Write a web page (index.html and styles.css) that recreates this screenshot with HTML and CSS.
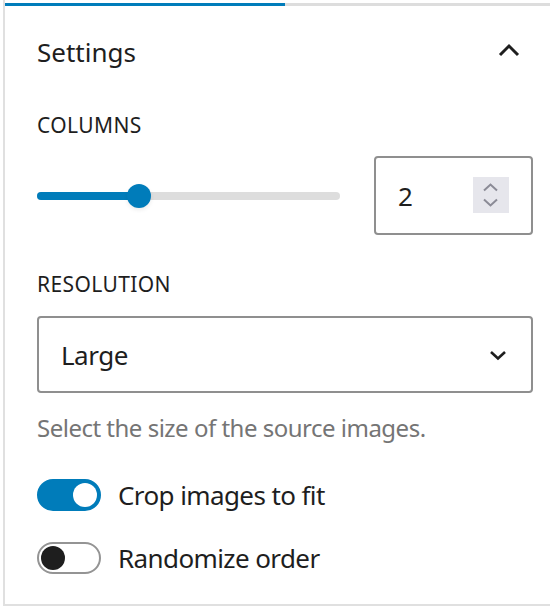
FILE: index.html
```html
<!DOCTYPE html>
<html>
<head>
<meta charset="utf-8">
<link rel="stylesheet" href="styles.css">
</head>
<body>
<div class="panel">
  <div class="tabline"><div class="tab-active"></div></div>
  <div class="header">
    <h2 class="title">Settings</h2>
    <svg class="chev-up" width="22" height="14" viewBox="0 0 22 14"><polyline points="2,12 11,3 20,12" fill="none" stroke="#1e1e1e" stroke-width="3"/></svg>
  </div>
  <div class="body">
    <div class="label">COLUMNS</div>
    <div class="range-row">
      <div class="slider">
        <div class="track"><div class="fill"></div></div>
        <div class="thumb"></div>
      </div>
      <div class="number">
        <span class="num-val">2</span>
        <div class="spin">
          <svg width="36" height="36" viewBox="0 0 36 36"><polyline points="11,13.5 17.5,7.5 24,13.5" fill="none" stroke="#8b8b96" stroke-width="2"/><polyline points="11,22.5 17.5,28.5 24,22.5" fill="none" stroke="#8b8b96" stroke-width="2"/></svg>
        </div>
      </div>
    </div>
    <div class="label label-res">RESOLUTION</div>
    <div class="select">
      <span class="sel-val">Large</span>
      <svg class="chev-down" width="18" height="12" viewBox="0 0 18 12"><polyline points="2,3 9,9.5 16,3" fill="none" stroke="#1e1e1e" stroke-width="2.6"/></svg>
    </div>
    <p class="help">Select the size of the source images.</p>
    <div class="toggle-row first">
      <span class="toggle on"><span class="knob"></span></span>
      <span class="toggle-label">Crop images to fit</span>
    </div>
    <div class="toggle-row">
      <span class="toggle off"><span class="knob"></span></span>
      <span class="toggle-label">Randomize order</span>
    </div>
  </div>
</div>
</body>
</html>
```
FILE: styles.css
```css
* { box-sizing: border-box; }
html, body { margin: 0; padding: 0; background: #fff; }
body {
  font-family: "Noto Sans", "Open Sans", sans-serif;
  color: #1e1e1e;
  width: 550px;
  height: 608px;
  overflow: hidden;
}
.panel {
  margin-left: 3px;
  height: 606px;
  border-left: 2px solid #e0e0e0;
  border-bottom: 2px solid #e0e0e0;
  display: flex;
  flex-direction: column;
}
.tabline {
  margin-top: 3px;
  height: 3px;
  background: #dddddd;
  display: flex;
}
.tab-active {
  width: 280px;
  background: #007cba;
}
.header {
  height: 92px;
  display: flex;
  align-items: center;
  justify-content: space-between;
  padding: 0 30px 0 32px;
}
.title {
  margin: 0;
  font-size: 26px;
  font-weight: 400;
  line-height: 36px;
}
.chev-up { display: block; margin-bottom: 4px; }
.body {
  padding: 0 17px 0 32px;
}
.label {
  margin-top: 13px;
  font-size: 21px;
  line-height: 28px;
  font-weight: 400;
  letter-spacing: 0.4px;
}
.range-row {
  margin-top: 17px;
  height: 79px;
  display: flex;
  align-items: center;
}
.slider {
  position: relative;
  flex: 1;
  height: 24px;
  margin-right: 34px;
  display: flex;
  align-items: center;
}
.track {
  width: 100%;
  height: 8px;
  border-radius: 4px;
  background: #dddddd;
  overflow: hidden;
}
.fill {
  width: 102px;
  height: 100%;
  background: #007cba;
}
.thumb {
  position: absolute;
  left: 90px;
  top: 0;
  width: 24px;
  height: 24px;
  border-radius: 50%;
  background: #007cba;
  box-shadow: 0 2px 4px rgba(0,0,0,0.08);
}
.number {
  width: 159px;
  height: 79px;
  border: 2px solid #8f8f8f;
  border-radius: 4px;
  display: flex;
  align-items: center;
  padding: 0 22px 0 22px;
}
.num-val {
  font-size: 26px;
  line-height: 32px;
}
.spin {
  margin-left: auto;
  width: 36px;
  height: 36px;
  background: #e6e6ec;
  margin-bottom: 2px;
}
.spin svg { display: block; }
.label-res { margin-top: 35px; }
.select {
  margin-top: 18px;
  height: 77px;
  border: 2px solid #8f8f8f;
  border-radius: 4px;
  display: flex;
  align-items: center;
  justify-content: space-between;
  padding: 0 24px 0 22px;
}
.sel-val {
  font-size: 26px;
  line-height: 32px;
  letter-spacing: -0.5px;
}
.chev-down { display: block; }
.help {
  margin: 19px 0 0 0;
  font-size: 24px;
  line-height: 32px;
  color: #757575;
  letter-spacing: -0.5px;
}
.toggle-row {
  display: flex;
  align-items: center;
  margin-top: 31px;
}
.toggle-row.first { margin-top: 35px; }
.toggle {
  width: 64px;
  height: 32px;
  border-radius: 16px;
  border: 2px solid #949494;
  display: flex;
  align-items: center;
  padding: 0 2px;
  flex-shrink: 0;
}
.toggle.on {
  background: #007cba;
  border-color: #007cba;
  justify-content: flex-end;
}
.knob {
  width: 24px;
  height: 24px;
  border-radius: 50%;
  background: #1e1e1e;
}
.toggle.on .knob { background: #fff; }
.toggle-label {
  margin-left: 17px;
  font-size: 26px;
  line-height: 32px;
  letter-spacing: -0.6px;
}
```
